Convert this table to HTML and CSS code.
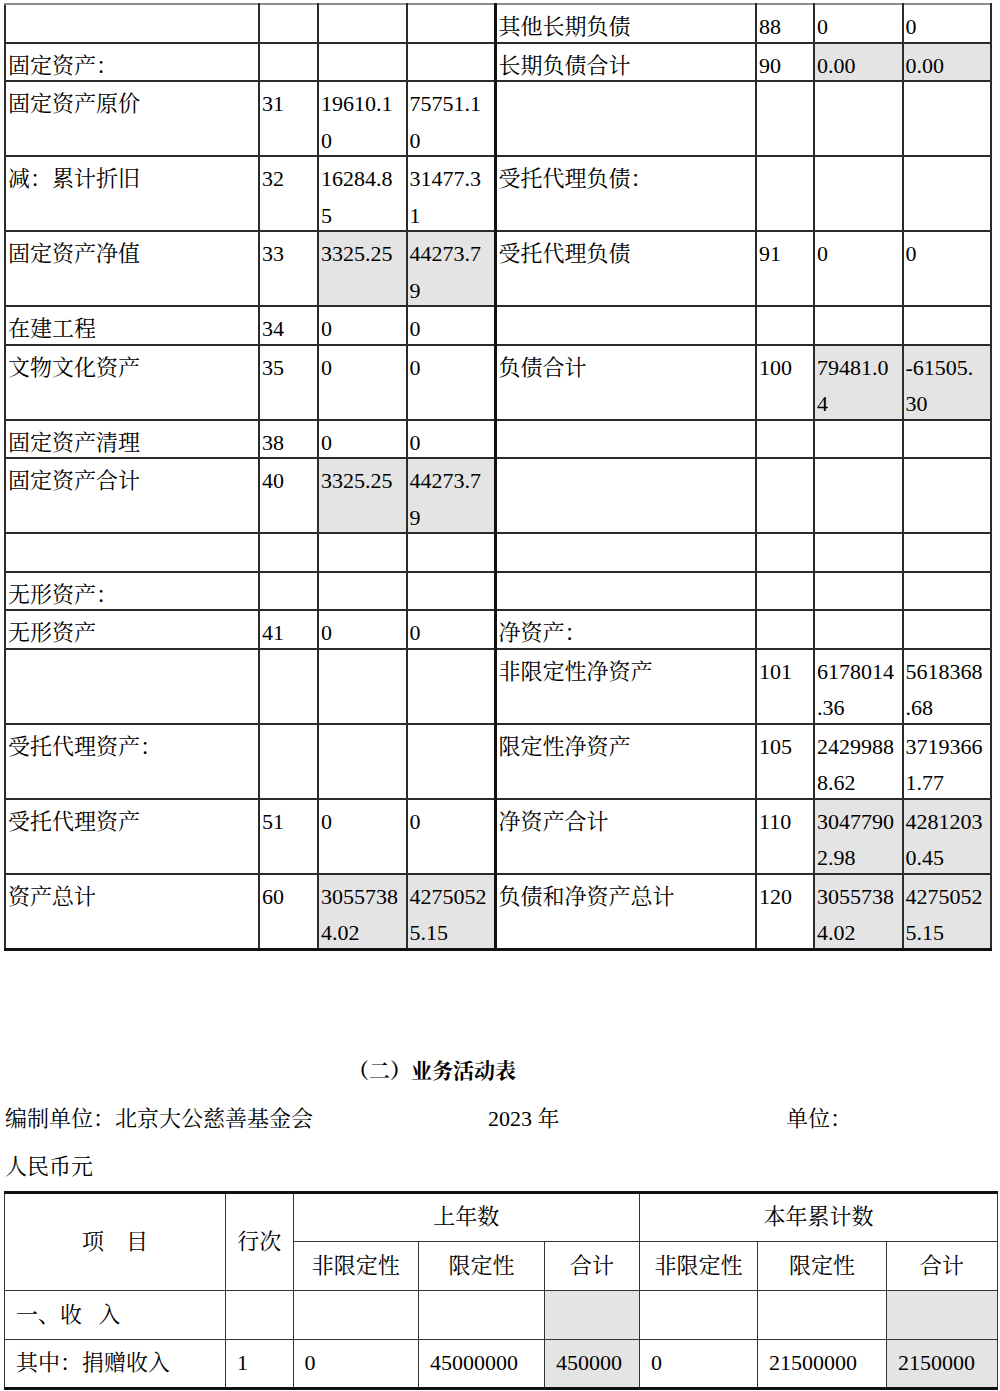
FILE: index.html
```html
<!DOCTYPE html>
<html lang="zh-CN">
<head>
<meta charset="utf-8">
<title>业务活动表</title>
<link rel="stylesheet" href="styles.css">
</head>
<body>
<table class="bal">
  <colgroup>
    <col class="c-name"><col class="c-no"><col class="c-num"><col class="c-num">
    <col class="c-name2"><col class="c-no2"><col class="c-num"><col class="c-num">
  </colgroup>
  <tr>
    <td></td><td></td><td></td><td></td>
    <td><span>其他长期负债</span></td><td><span>88</span></td><td><span>0</span></td><td><span>0</span></td>
  </tr>
  <tr>
    <td><span>固定资产：</span></td><td></td><td></td><td></td>
    <td><span>长期负债合计</span></td><td><span>90</span></td><td class="shade"><span>0.00</span></td><td class="shade"><span>0.00</span></td>
  </tr>
  <tr>
    <td><span>固定资产原价</span></td><td><span>31</span></td><td><span>19610.1<br>0</span></td><td><span>75751.1<br>0</span></td>
    <td></td><td></td><td></td><td></td>
  </tr>
  <tr>
    <td><span>减：累计折旧</span></td><td><span>32</span></td><td><span>16284.8<br>5</span></td><td><span>31477.3<br>1</span></td>
    <td><span>受托代理负债：</span></td><td></td><td></td><td></td>
  </tr>
  <tr>
    <td><span>固定资产净值</span></td><td><span>33</span></td><td class="shade"><span>3325.25</span></td><td class="shade"><span>44273.7<br>9</span></td>
    <td><span>受托代理负债</span></td><td><span>91</span></td><td><span>0</span></td><td><span>0</span></td>
  </tr>
  <tr>
    <td><span>在建工程</span></td><td><span>34</span></td><td><span>0</span></td><td><span>0</span></td>
    <td></td><td></td><td></td><td></td>
  </tr>
  <tr>
    <td><span>文物文化资产</span></td><td><span>35</span></td><td><span>0</span></td><td><span>0</span></td>
    <td><span>负债合计</span></td><td><span>100</span></td><td class="shade"><span>79481.0<br>4</span></td><td class="shade"><span>-61505.<br>30</span></td>
  </tr>
  <tr>
    <td><span>固定资产清理</span></td><td><span>38</span></td><td><span>0</span></td><td><span>0</span></td>
    <td></td><td></td><td></td><td></td>
  </tr>
  <tr>
    <td><span>固定资产合计</span></td><td><span>40</span></td><td class="shade"><span>3325.25</span></td><td class="shade"><span>44273.7<br>9</span></td>
    <td></td><td></td><td></td><td></td>
  </tr>
  <tr>
    <td><span>&nbsp;</span></td><td></td><td></td><td></td>
    <td></td><td></td><td></td><td></td>
  </tr>
  <tr>
    <td><span>无形资产：</span></td><td></td><td></td><td></td>
    <td></td><td></td><td></td><td></td>
  </tr>
  <tr>
    <td><span>无形资产</span></td><td><span>41</span></td><td><span>0</span></td><td><span>0</span></td>
    <td><span>净资产：</span></td><td></td><td></td><td></td>
  </tr>
  <tr>
    <td></td><td></td><td></td><td></td>
    <td><span>非限定性净资产</span></td><td><span>101</span></td><td><span>6178014<br>.36</span></td><td><span>5618368<br>.68</span></td>
  </tr>
  <tr>
    <td><span>受托代理资产：</span></td><td></td><td></td><td></td>
    <td><span>限定性净资产</span></td><td><span>105</span></td><td><span>2429988<br>8.62</span></td><td><span>3719366<br>1.77</span></td>
  </tr>
  <tr>
    <td><span>受托代理资产</span></td><td><span>51</span></td><td><span>0</span></td><td><span>0</span></td>
    <td><span>净资产合计</span></td><td><span>110</span></td><td class="shade"><span>3047790<br>2.98</span></td><td class="shade"><span>4281203<br>0.45</span></td>
  </tr>
  <tr>
    <td><span>资产总计</span></td><td><span>60</span></td><td class="shade"><span>3055738<br>4.02</span></td><td class="shade"><span>4275052<br>5.15</span></td>
    <td><span>负债和净资产总计</span></td><td><span>120</span></td><td class="shade"><span>3055738<br>4.02</span></td><td class="shade"><span>4275052<br>5.15</span></td>
  </tr>
</table>

<h2 class="title">（二）业务活动表</h2>
<div class="meta">
  <span class="org">编制单位：北京大公慈善基金会</span>
  <span class="year">2023 年</span>
  <span class="unit-label">单位：</span>
</div>
<div class="currency">人民币元</div>

<table class="act">
  <colgroup>
    <col class="a-item"><col class="a-no"><col class="a-v1"><col class="a-v2"><col class="a-v3">
    <col class="a-v4"><col class="a-v5"><col class="a-v6">
  </colgroup>
  <tr>
    <td rowspan="2" class="ctr">项　目</td>
    <td rowspan="2" class="ctr">行次</td>
    <td colspan="3" class="ctr">上年数</td>
    <td colspan="3" class="ctr">本年累计数</td>
  </tr>
  <tr>
    <td class="ctr">非限定性</td><td class="ctr">限定性</td><td class="ctr">合计</td>
    <td class="ctr">非限定性</td><td class="ctr">限定性</td><td class="ctr">合计</td>
  </tr>
  <tr>
    <td class="pre">一、收   入</td><td></td><td></td><td></td><td class="shade"></td>
    <td></td><td></td><td class="shade"></td>
  </tr>
  <tr>
    <td>其中：捐赠收入</td><td>1</td><td>0</td><td>45000000</td><td class="shade">450000</td>
    <td>0</td><td>21500000</td><td class="shade">2150000</td>
  </tr>
</table>
</body>
</html>
```

FILE: styles.css
```css
* { box-sizing: border-box; }
html, body { margin: 0; padding: 0; background: #fff; }
body {
  width: 1000px;
  font-family: "Liberation Serif", "Noto Serif CJK SC", "Noto Sans CJK SC", serif;
  font-size: 22px;
  color: #000;
}

/* Balance sheet continuation */
.bal {
  border-collapse: collapse;
  table-layout: fixed;
  width: 988px;
  margin: 3px 0 0 4px;
}
.bal .c-name { width: 254px; }
.bal .c-no { width: 59px; }
.bal .c-num { width: 88.5px; }
.bal .c-name2 { width: 261px; }
.bal .c-no2 { width: 58px; }
.bal td {
  border: 2px solid #2b2b2b;
  padding: 0 0 0 2px;
  line-height: 36.5px;
  vertical-align: top;
  white-space: nowrap;
  overflow: hidden;
}
.bal tr:first-child td { border-top-color: #8c8c8c; }
.bal td:nth-child(5) { border-left: 3px solid #111; }
.bal tr:last-child td { border-bottom: 3px solid #111; }
.bal td span {
  line-height: 22px;
  vertical-align: -4px;
}
.shade { background: #e4e4e4; }

/* Business activity statement */
.title {
  margin: 96px 0 0;
  padding-left: 348px;
  font-size: 21px;
  font-weight: bold;
  line-height: 48px;
}
.meta {
  display: flex;
  line-height: 48px;
  padding-left: 5px;
}
.meta .org { width: 483px; }
.meta .year { width: 298px; }
.currency {
  line-height: 48px;
  padding-left: 5px;
}

.act {
  border-collapse: collapse;
  table-layout: fixed;
  width: 993px;
  margin-left: 4px;
}
.act .a-item { width: 221px; }
.act .a-no { width: 67.5px; }
.act .a-v1 { width: 125.5px; }
.act .a-v2 { width: 126px; }
.act .a-v3 { width: 95px; }
.act .a-v4 { width: 118px; }
.act .a-v5 { width: 129px; }
.act .a-v6 { width: 111px; }
.act tr { height: 49px; }
.act td {
  border: 1.5px solid #333;
  padding: 0 0 0 11px;
  vertical-align: middle;
  line-height: 24px;
  white-space: nowrap;
}
.act tr:first-child td { border-top: 3px solid #111; }
.act tr:last-child td { border-bottom: 3px solid #111; }
.act td.ctr { text-align: center; padding: 0; }
.act td.pre { white-space: pre; }
```
